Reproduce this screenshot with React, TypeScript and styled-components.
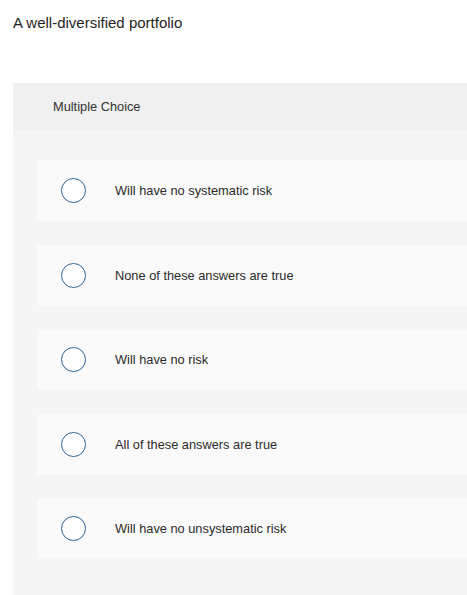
import React from "react";
import styled, { createGlobalStyle } from "styled-components";

const GlobalStyle = createGlobalStyle`
  html, body {
    margin: 0;
    padding: 0;
    background: #ffffff;
    font-family: "Liberation Sans", Arial, sans-serif;
    color: #222;
  }
`;

const Page = styled.div`
  width: 467px;
  height: 595px;
  overflow: hidden;
`;

const Question = styled.p`
  margin: 0;
  padding: 14px 0 0 13px;
  height: 83px;
  box-sizing: border-box;
  font-size: 15px;
  line-height: 18px;
  color: #1f1f1f;
`;

const Panel = styled.section`
  margin-left: 13px;
  width: 480px;
  background: #f5f5f5;
  height: 520px;
`;

const PanelHeader = styled.div`
  height: 47px;
  background: #f0f0f0;
  display: flex;
  align-items: center;
  padding-left: 40px;
  font-size: 12.8px;
  color: #333;
`;

const Options = styled.ul`
  list-style: none;
  margin: 0;
  padding: 30px 0 0 24px;
  display: flex;
  flex-direction: column;
  gap: 23.5px;
`;

const Option = styled.li`
  height: 61px;
  background: #fafafa;
  border-radius: 3px;
  display: flex;
  align-items: center;
  padding-left: 24px;
  font-size: 12.8px;
  color: #2b2b2b;
`;

const Radio = styled.span`
  width: 23px;
  height: 23px;
  border: 1.5px solid #2f6395;
  border-radius: 50%;
  background: #fff;
  flex-shrink: 0;
  margin-right: 29px;
`;

const choices = [
  "Will have no systematic risk",
  "None of these answers are true",
  "Will have no risk",
  "All of these answers are true",
  "Will have no unsystematic risk",
];

export default function App() {
  return (
    <Page>
      <GlobalStyle />
      <Question>A well-diversified portfolio</Question>
      <Panel>
        <PanelHeader>Multiple Choice</PanelHeader>
        <Options>
          {choices.map((c) => (
            <Option key={c}>
              <Radio />
              {c}
            </Option>
          ))}
        </Options>
      </Panel>
    </Page>
  );
}
